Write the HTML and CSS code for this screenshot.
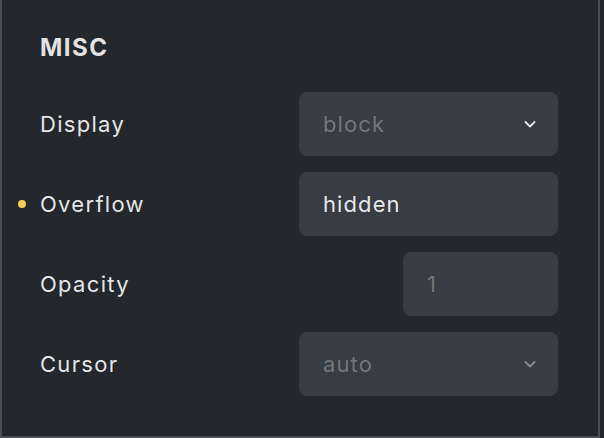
FILE: index.html
```html
<!DOCTYPE html>
<html>
<head>
    <title>Misc</title>
    <link rel="stylesheet" href="styles.css">
</head>
<body>
    <div class="panel">
        <h2 class="panel-title">MISC</h2>
        <div class="row">
            <label class="row-label">Display</label>
            <div class="field select">
                <span class="value muted">block</span>
                <svg class="chevron" width="14" height="14" viewBox="0 0 14 14"><path d="M2.5 5 L7 9.5 L11.5 5" fill="none" stroke="#e6e6e8" stroke-width="1.8" stroke-linecap="round" stroke-linejoin="round"/></svg>
            </div>
        </div>
        <div class="row">
            <label class="row-label changed">Overflow</label>
            <div class="field">
                <span class="value">hidden</span>
            </div>
        </div>
        <div class="row">
            <label class="row-label">Opacity</label>
            <div class="field small">
                <span class="value muted">1</span>
            </div>
        </div>
        <div class="row">
            <label class="row-label">Cursor</label>
            <div class="field select">
                <span class="value muted">auto</span>
                <svg class="chevron" width="14" height="14" viewBox="0 0 14 14"><path d="M2.5 5 L7 9.5 L11.5 5" fill="none" stroke="#8a8d92" stroke-width="1.8" stroke-linecap="round" stroke-linejoin="round"/></svg>
            </div>
        </div>
    </div>
</body>
</html>
```

FILE: styles.css
```css
html, body {
    margin: 0;
    padding: 0;
    background-color: #24272c;
}
body {
    font-family: Inter, "Noto Sans", sans-serif;
    width: 604px;
    height: 438px;
    overflow: hidden;
}
.panel {
    box-sizing: border-box;
    width: 600px;
    height: 438px;
    background-color: #24272c;
    border: 2px solid #4a4e55;
    border-top: none;
    padding: 31px 40px 0 38px;
}
.panel-title {
    margin: 0 0 27px 0;
    font-size: 24px;
    line-height: 34px;
    font-weight: 700;
    color: #e2e3e5;
    letter-spacing: 1.5px;
}
.row {
    display: flex;
    align-items: center;
    height: 64px;
    margin-bottom: 16px;
}
.row-label {
    flex: 1;
    position: relative;
    font-size: 22px;
    color: #e4e5e7;
    letter-spacing: 1.3px;
}
.row-label.changed::before {
    content: "";
    position: absolute;
    left: -22px;
    top: 50%;
    width: 8px;
    height: 8px;
    margin-top: -4px;
    border-radius: 50%;
    background-color: #f5cf55;
}
.field {
    box-sizing: border-box;
    width: 259px;
    height: 64px;
    border-radius: 8px;
    background-color: #383c43;
    display: flex;
    align-items: center;
    padding: 0 21px 0 24px;
}
.field.small {
    width: 155px;
}
.value {
    flex: 1;
    font-size: 22px;
    color: #e6e7e9;
    letter-spacing: 1.1px;
}
.value.muted {
    color: #72767c;
}
.chevron {
    display: block;
}
```
